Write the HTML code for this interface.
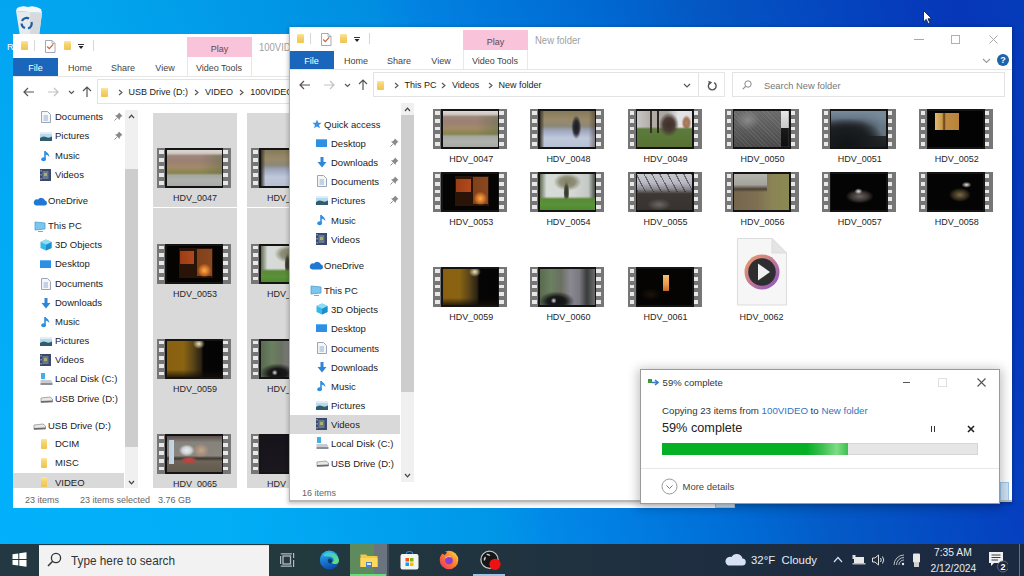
<!DOCTYPE html><html><head><meta charset="utf-8"><style>
*{margin:0;padding:0;box-sizing:border-box}
html,body{width:1024px;height:576px;overflow:hidden}
body{position:relative;font-family:"Liberation Sans",sans-serif;color:#222;background:#0289e8}
.abs{position:absolute}
.t{position:absolute;white-space:nowrap;line-height:1}
.win{position:absolute;background:#fff;overflow:hidden}
</style></head><body><div class="abs" style="left:0;top:0;width:1024px;height:576px;background:linear-gradient(180deg,rgba(0,40,140,0.07) 0%,rgba(0,40,140,0.03) 50%,rgba(0,0,0,0) 80%),linear-gradient(76deg,#02b0fb 0%,#02aef6 20%,#0096e8 44%,#0289e8 48%,#006fd8 63%,#045bc8 72%,#0540c0 88%,#0538bc 94%,#053dbd 100%)"></div>
<svg class="abs" style="left:14px;top:4px" width="32" height="32"><path d="M2 7 L28 9 L25 32 L6 32Z" fill="#e4eaee"/><path d="M16 8 L28 9 L25 32 L16 32Z" fill="#d6dadc"/><path d="M3 4 Q8 1 14 3 Q20 1 27 5 L28 9 L2 7Z" fill="#f4f6f8"/><g fill="none" stroke="#1e5e9e" stroke-width="2.2"><path d="M8 17 A5 5 0 0 1 15 14.5"/><path d="M17.5 18 A5 5 0 0 1 14 24.5"/><path d="M11 24 A5 5 0 0 1 7.6 19.5"/></g></svg>
<div class="win" style="left:13px;top:34px;width:722px;height:474px;">
<div class="abs" style="left:8px;top:7px;width:7px;height:9px;background:linear-gradient(180deg,#fbe7a0 0%,#f6d470 35%,#f0c450 100%);border-radius:1px"></div><div class="abs" style="left:21px;top:6px;width:1px;height:11px;background:#d6d6d6"></div><svg class="abs" style="left:32px;top:6px" width="11" height="13"><path d="M0.5 0.5 H7 L10 3.5 V12.5 H0.5Z" fill="#fff" stroke="#9aa2b0" stroke-width="0.9"/><path d="M7 0.5 V3.5 H10" fill="none" stroke="#9aa2b0" stroke-width="0.8"/><path d="M2.2 6.5 L4.3 8.7 L8.2 4.3" stroke="#c8643a" stroke-width="1.2" fill="none"/></svg><div class="abs" style="left:51px;top:7px;width:7px;height:9px;background:linear-gradient(180deg,#fbe7a0 0%,#f6d470 35%,#f0c450 100%);border-radius:1px"></div><svg class="abs" style="left:65px;top:10px" width="6" height="6"><path d="M0 0.5 H6" stroke="#333" stroke-width="1"/><path d="M0.5 2 L3 5 L5.5 2Z" fill="#222"/></svg><div class="abs" style="left:80px;top:6px;width:1px;height:11px;background:#d6d6d6"></div>
<div class="abs" style="left:174px;top:3px;width:65px;height:20px;background:#f9c4da"></div><div class="t" style="left:174px;top:10.5px;width:65px;text-align:center;font-size:9px;color:#5e4655">Play</div><div class="abs" style="left:174px;top:23px;width:65px;height:20px;border-left:1px solid #f2e2ea;border-right:1px solid #f2e2ea"></div><div class="t" style="left:246px;top:8.5px;font-size:10px;transform:scaleX(.95);transform-origin:0 0;color:#a0a0a0">100VIDEO</div><div class="abs" style="left:0;top:24px;width:45px;height:18px;background:#1a66ba"></div><div class="t" style="left:0;top:30px;width:45px;text-align:center;font-size:9px;color:#fff">File</div><div class="t" style="left:27px;top:30px;width:80px;text-align:center;font-size:9px;color:#444">Home</div><div class="t" style="left:70px;top:30px;width:80px;text-align:center;font-size:9px;color:#444">Share</div><div class="t" style="left:112px;top:30px;width:80px;text-align:center;font-size:9px;color:#444">View</div><div class="t" style="left:166px;top:30px;width:80px;text-align:center;font-size:9px;color:#444">Video Tools</div><div class="abs" style="left:0;top:42px;width:722px;height:1px;background:#e6e6e6"></div>
<svg class="abs" style="left:10px;top:53px" width="12" height="10"><path d="M1 5 H11 M5 1 L1 5 L5 9" stroke="#555" stroke-width="1.2" fill="none"/></svg><svg class="abs" style="left:34px;top:53px" width="12" height="10"><path d="M1 5 H11 M7 1 L11 5 L7 9" stroke="#c2c2c2" stroke-width="1.2" fill="none"/></svg><svg class="abs" style="left:55px;top:56px" width="7" height="5"><path d="M1 1 L3.5 3.5 L6 1" stroke="#555" stroke-width="1.1" fill="none"/></svg><svg class="abs" style="left:69px;top:52px" width="10" height="12"><path d="M5 11 V1 M1 5 L5 1 L9 5" stroke="#555" stroke-width="1.2" fill="none"/></svg><div class="abs" style="left:84px;top:45px;width:300px;height:25px;border:1px solid #e3e3e3;background:#fff"></div><div class="abs" style="left:88px;top:54px;width:7px;height:9px;background:linear-gradient(180deg,#fbe7a0 0%,#f6d470 35%,#f0c450 100%);border-radius:1px"></div><svg class="abs" style="left:104.7px;top:55px" width="5" height="7"><path d="M1 1 L4 3.5 L1 6" stroke="#555" stroke-width="1.1" fill="none"/></svg><div class="t" style="left:115.60000000000001px;top:53.5px;font-size:9px;color:#222">USB Drive (D:)</div><svg class="abs" style="left:181.2px;top:55px" width="5" height="7"><path d="M1 1 L4 3.5 L1 6" stroke="#555" stroke-width="1.1" fill="none"/></svg><div class="t" style="left:192.1px;top:53.5px;font-size:9px;color:#222">VIDEO</div><svg class="abs" style="left:226.39999999999998px;top:55px" width="5" height="7"><path d="M1 1 L4 3.5 L1 6" stroke="#555" stroke-width="1.1" fill="none"/></svg><div class="t" style="left:237.29999999999998px;top:53.5px;font-size:9px;color:#222">100VIDEO</div>
<div class="abs" style="left:0;top:73px;width:125px;height:381px;overflow:hidden"><svg class="abs" style="left:28px;top:-14.5px" width="10" height="11"><path d="M3.5 0 H6.5 V5 H9.5 L5 10.5 L0.5 5 H3.5Z" fill="#2f86d8"/></svg><div class="t" style="left:42px;top:-13.8px;font-size:9.8px;transform:scaleX(.97);transform-origin:0 0;color:#222">Downloads</div><svg class="abs" style="left:101px;top:-14.5px" width="9" height="9"><path d="M5 0.5 L8.5 4 L7.3 4.6 L5.8 6.2 L5.6 8 L1 3.4 L2.8 3.2 L4.4 1.7Z" fill="#8a8a8a"/><path d="M2.7 6.3 L0.5 8.5" stroke="#8a8a8a" stroke-width="1"/></svg><svg class="abs" style="left:28px;top:3.5px" width="10" height="12"><path d="M0.5 0.5 H6.5 L9.5 3.5 V11.5 H0.5Z" fill="#f4f6f8" stroke="#9aa6b4"/><path d="M2.5 5 H7 M2.5 7 H7 M2.5 9 H7" stroke="#7aa0c8" stroke-width="0.8"/></svg><div class="t" style="left:42px;top:5.2px;font-size:9.8px;transform:scaleX(.97);transform-origin:0 0;color:#222">Documents</div><svg class="abs" style="left:101px;top:4.5px" width="9" height="9"><path d="M5 0.5 L8.5 4 L7.3 4.6 L5.8 6.2 L5.6 8 L1 3.4 L2.8 3.2 L4.4 1.7Z" fill="#8a8a8a"/><path d="M2.7 6.3 L0.5 8.5" stroke="#8a8a8a" stroke-width="1"/></svg><svg class="abs" style="left:27px;top:24.5px" width="12" height="9"><rect x="0" y="0" width="12" height="9" fill="#b8d8ec"/><rect x="0" y="0" width="12" height="2" fill="#e0eef8"/><path d="M0 6 Q3 3.5 6 5 Q9 6.5 12 4.5 V9 H0Z" fill="#2e5e6e"/></svg><div class="t" style="left:42px;top:24.2px;font-size:9.8px;transform:scaleX(.97);transform-origin:0 0;color:#222">Pictures</div><svg class="abs" style="left:101px;top:23.5px" width="9" height="9"><path d="M5 0.5 L8.5 4 L7.3 4.6 L5.8 6.2 L5.6 8 L1 3.4 L2.8 3.2 L4.4 1.7Z" fill="#8a8a8a"/><path d="M2.7 6.3 L0.5 8.5" stroke="#8a8a8a" stroke-width="1"/></svg><svg class="abs" style="left:28px;top:42.5px" width="10" height="12"><path d="M4 1 V9" stroke="#2f8ee0" stroke-width="1.6"/><ellipse cx="2.6" cy="9.3" rx="2.4" ry="2" fill="#2f8ee0"/><path d="M4 1 Q8 3 8.5 7 Q7 4.5 4 4.5" fill="#2f8ee0"/></svg><div class="t" style="left:42px;top:44.2px;font-size:9.8px;transform:scaleX(.97);transform-origin:0 0;color:#222">Music</div><svg class="abs" style="left:27px;top:61.5px" width="11" height="12"><rect x="0" y="0" width="11" height="12" fill="#3a4a6e"/><rect x="2.5" y="2" width="6" height="8" fill="#6a7a8a"/><rect x="4" y="4" width="3" height="3" fill="#a8b070"/><rect x="0.5" y="1" width="1.2" height="1.5" fill="#9aa8c8"/><rect x="0.5" y="5" width="1.2" height="1.5" fill="#9aa8c8"/><rect x="0.5" y="9" width="1.2" height="1.5" fill="#9aa8c8"/></svg><div class="t" style="left:42px;top:63.2px;font-size:9.8px;transform:scaleX(.97);transform-origin:0 0;color:#222">Videos</div><svg class="abs" style="left:20px;top:89.5px" width="14" height="9"><path d="M3 8.5 H12 A2.5 2.5 0 0 0 12 3.6 A4 4 0 0 0 5 2.5 A3 3 0 0 0 3 8.5Z" fill="#1f78d6"/></svg><div class="t" style="left:35px;top:89.2px;font-size:9.8px;transform:scaleX(.97);transform-origin:0 0;color:#222">OneDrive</div><svg class="abs" style="left:21px;top:113.5px" width="13" height="11"><path d="M1 1 L11 2 L11 8 L1 9Z" fill="#7cc6ee" stroke="#4c9fd4" stroke-width="0.8"/><path d="M4 10.5 H9" stroke="#8aa" stroke-width="1"/></svg><div class="t" style="left:35px;top:114.2px;font-size:9.8px;transform:scaleX(.97);transform-origin:0 0;color:#222">This PC</div><svg class="abs" style="left:27px;top:131.5px" width="12" height="12"><path d="M6 0.5 L11.5 3 V9 L6 11.5 L0.5 9 V3Z" fill="#38b8e8"/><path d="M6 6 L11.5 3 V9 L6 11.5Z" fill="#1f8fcc"/><path d="M0.5 3 L6 0.5 L11.5 3 L6 5.5Z" fill="#8fdcf6"/></svg><div class="t" style="left:42px;top:133.2px;font-size:9.8px;transform:scaleX(.97);transform-origin:0 0;color:#222">3D Objects</div><div class="abs" style="left:27px;top:152.5px;width:11px;height:8px;background:#2e8fe6;border-top:1px solid #68b4f2"></div><div class="t" style="left:42px;top:152.2px;font-size:9.8px;transform:scaleX(.97);transform-origin:0 0;color:#222">Desktop</div><svg class="abs" style="left:28px;top:170.5px" width="10" height="12"><path d="M0.5 0.5 H6.5 L9.5 3.5 V11.5 H0.5Z" fill="#f4f6f8" stroke="#9aa6b4"/><path d="M2.5 5 H7 M2.5 7 H7 M2.5 9 H7" stroke="#7aa0c8" stroke-width="0.8"/></svg><div class="t" style="left:42px;top:172.2px;font-size:9.8px;transform:scaleX(.97);transform-origin:0 0;color:#222">Documents</div><svg class="abs" style="left:28px;top:190.5px" width="10" height="11"><path d="M3.5 0 H6.5 V5 H9.5 L5 10.5 L0.5 5 H3.5Z" fill="#2f86d8"/></svg><div class="t" style="left:42px;top:191.2px;font-size:9.8px;transform:scaleX(.97);transform-origin:0 0;color:#222">Downloads</div><svg class="abs" style="left:28px;top:208.5px" width="10" height="12"><path d="M4 1 V9" stroke="#2f8ee0" stroke-width="1.6"/><ellipse cx="2.6" cy="9.3" rx="2.4" ry="2" fill="#2f8ee0"/><path d="M4 1 Q8 3 8.5 7 Q7 4.5 4 4.5" fill="#2f8ee0"/></svg><div class="t" style="left:42px;top:210.2px;font-size:9.8px;transform:scaleX(.97);transform-origin:0 0;color:#222">Music</div><svg class="abs" style="left:27px;top:229.5px" width="12" height="9"><rect x="0" y="0" width="12" height="9" fill="#b8d8ec"/><rect x="0" y="0" width="12" height="2" fill="#e0eef8"/><path d="M0 6 Q3 3.5 6 5 Q9 6.5 12 4.5 V9 H0Z" fill="#2e5e6e"/></svg><div class="t" style="left:42px;top:229.2px;font-size:9.8px;transform:scaleX(.97);transform-origin:0 0;color:#222">Pictures</div><svg class="abs" style="left:27px;top:246.5px" width="11" height="12"><rect x="0" y="0" width="11" height="12" fill="#3a4a6e"/><rect x="2.5" y="2" width="6" height="8" fill="#6a7a8a"/><rect x="4" y="4" width="3" height="3" fill="#a8b070"/><rect x="0.5" y="1" width="1.2" height="1.5" fill="#9aa8c8"/><rect x="0.5" y="5" width="1.2" height="1.5" fill="#9aa8c8"/><rect x="0.5" y="9" width="1.2" height="1.5" fill="#9aa8c8"/></svg><div class="t" style="left:42px;top:248.2px;font-size:9.8px;transform:scaleX(.97);transform-origin:0 0;color:#222">Videos</div><svg class="abs" style="left:27px;top:265.5px" width="13" height="12"><rect x="1" y="0" width="4" height="6" fill="#42b0e8"/><path d="M0.5 7 H11 L12.5 10 H0.5Z" fill="#c8ccd2"/><rect x="0.5" y="10" width="12" height="2" fill="#8a9098"/></svg><div class="t" style="left:42px;top:267.2px;font-size:9.8px;transform:scaleX(.97);transform-origin:0 0;color:#222">Local Disk (C:)</div><svg class="abs" style="left:27px;top:288.5px" width="13" height="7"><path d="M1 2 L10 1 L12.5 3 V6 L1 6.5Z" fill="#e8e8e8" stroke="#8a8a8a" stroke-width="0.7"/><path d="M1 5 L12.5 4.5 V6 L1 6.5Z" fill="#6b6b6b"/></svg><div class="t" style="left:42px;top:287.2px;font-size:9.8px;transform:scaleX(.97);transform-origin:0 0;color:#222">USB Drive (D:)</div><svg class="abs" style="left:20px;top:315.5px" width="13" height="7"><path d="M1 2 L10 1 L12.5 3 V6 L1 6.5Z" fill="#e8e8e8" stroke="#8a8a8a" stroke-width="0.7"/><path d="M1 5 L12.5 4.5 V6 L1 6.5Z" fill="#6b6b6b"/></svg><div class="t" style="left:35px;top:314.2px;font-size:9.8px;transform:scaleX(.97);transform-origin:0 0;color:#222">USB Drive (D:)</div><div class="abs" style="left:28px;top:331.5px;width:6px;height:10px;background:linear-gradient(180deg,#fbe7a0 0%,#f6d470 35%,#f0c450 100%);border-radius:1px"></div><div class="t" style="left:42px;top:332.2px;font-size:9.8px;transform:scaleX(.97);transform-origin:0 0;color:#222">DCIM</div><div class="abs" style="left:28px;top:350.5px;width:6px;height:10px;background:linear-gradient(180deg,#fbe7a0 0%,#f6d470 35%,#f0c450 100%);border-radius:1px"></div><div class="t" style="left:42px;top:351.2px;font-size:9.8px;transform:scaleX(.97);transform-origin:0 0;color:#222">MISC</div><div class="abs" style="left:0;top:365.5px;width:111px;height:19px;background:#d9d9d9"></div><div class="abs" style="left:28px;top:370.0px;width:6px;height:10px;background:linear-gradient(180deg,#fbe7a0 0%,#f6d470 35%,#f0c450 100%);border-radius:1px"></div><div class="t" style="left:42px;top:370.7px;font-size:9.8px;transform:scaleX(.97);transform-origin:0 0;color:#222">VIDEO</div></div><div class="abs" style="left:112px;top:76px;width:13px;height:378px;background:#f0f0f0"></div><div class="abs" style="left:112px;top:135px;width:13px;height:277.5px;background:#cdcdcd"></div><svg class="abs" style="left:115px;top:79.5px" width="7" height="5"><path d="M1 4 L3.5 1.2 L6 4" stroke="#444" stroke-width="1.2" fill="none"/></svg><svg class="abs" style="left:115px;top:445.5px" width="7" height="5"><path d="M1 1 L3.5 3.8 L6 1" stroke="#444" stroke-width="1.2" fill="none"/></svg>
<div class="abs" style="left:125px;top:73px;width:300px;height:381px;overflow:hidden"><div class="abs" style="left:15px;top:5.5px;width:84px;height:94.5px;background:#d9d9d9"></div><div class="abs" style="left:19px;top:41.0px;width:74px;height:40px;background:#767676"><div class="abs" style="left:2px;top:2.0px;width:4.5px;height:3.8px;background:#e8e8e8"></div><div class="abs" style="left:2px;top:9.8px;width:4.5px;height:3.8px;background:#e8e8e8"></div><div class="abs" style="left:2px;top:17.6px;width:4.5px;height:3.8px;background:#e8e8e8"></div><div class="abs" style="left:2px;top:25.4px;width:4.5px;height:3.8px;background:#e8e8e8"></div><div class="abs" style="left:2px;top:33.2px;width:4.5px;height:3.8px;background:#e8e8e8"></div><div class="abs" style="left:66px;top:2.0px;width:4.5px;height:3.8px;background:#e8e8e8"></div><div class="abs" style="left:66px;top:9.8px;width:4.5px;height:3.8px;background:#e8e8e8"></div><div class="abs" style="left:66px;top:17.6px;width:4.5px;height:3.8px;background:#e8e8e8"></div><div class="abs" style="left:66px;top:25.4px;width:4.5px;height:3.8px;background:#e8e8e8"></div><div class="abs" style="left:66px;top:33.2px;width:4.5px;height:3.8px;background:#e8e8e8"></div><div class="abs" style="left:8px;top:0;width:58px;height:40px;background:#141414;padding:2px 1.5px"><div style="width:100%;height:100%;background:linear-gradient(180deg,#dcd8d4 0%,#d0c8c2 9%,rgba(0,0,0,0) 16%),linear-gradient(180deg,rgba(0,0,0,0) 64%,#a4a6a2 70%,#b0b2ae 85%,#a8aaa6 100%),linear-gradient(90deg,rgba(0,0,0,0) 60%,rgba(100,110,70,0.5) 100%),linear-gradient(180deg,#a08a80 10%,#9c8074 30%,#a28a6a 48%,#8c8650 60%,#88844e 66%),linear-gradient(90deg,#9a8880 0%,#a07e72 40%,#a89870 70%,#b0a070 100%)"></div></div></div><div class="t" style="left:15px;top:87.0px;width:84px;text-align:center;font-size:9px;color:#262626">HDV_0047</div><div class="abs" style="left:109px;top:5.5px;width:84px;height:94.5px;background:#d9d9d9"></div><div class="abs" style="left:113px;top:41.0px;width:74px;height:40px;background:#767676"><div class="abs" style="left:2px;top:2.0px;width:4.5px;height:3.8px;background:#e8e8e8"></div><div class="abs" style="left:2px;top:9.8px;width:4.5px;height:3.8px;background:#e8e8e8"></div><div class="abs" style="left:2px;top:17.6px;width:4.5px;height:3.8px;background:#e8e8e8"></div><div class="abs" style="left:2px;top:25.4px;width:4.5px;height:3.8px;background:#e8e8e8"></div><div class="abs" style="left:2px;top:33.2px;width:4.5px;height:3.8px;background:#e8e8e8"></div><div class="abs" style="left:66px;top:2.0px;width:4.5px;height:3.8px;background:#e8e8e8"></div><div class="abs" style="left:66px;top:9.8px;width:4.5px;height:3.8px;background:#e8e8e8"></div><div class="abs" style="left:66px;top:17.6px;width:4.5px;height:3.8px;background:#e8e8e8"></div><div class="abs" style="left:66px;top:25.4px;width:4.5px;height:3.8px;background:#e8e8e8"></div><div class="abs" style="left:66px;top:33.2px;width:4.5px;height:3.8px;background:#e8e8e8"></div><div class="abs" style="left:8px;top:0;width:58px;height:40px;background:#141414;padding:2px 1.5px"><div style="width:100%;height:100%;background:radial-gradient(ellipse 5px 12px at 66% 45%,#1a1a20 0%,#2a2a30 55%,rgba(0,0,0,0) 100%),linear-gradient(90deg,#3a3428 0%,rgba(0,0,0,0) 8%,rgba(0,0,0,0) 88%,rgba(60,50,40,.5) 100%),linear-gradient(180deg,#857a5c 0%,#9a8a6a 25%,#8a8878 42%,#a0a8c0 55%,#c0c8dc 75%,#b8c0d4 100%)"></div></div></div><div class="t" style="left:109px;top:87.0px;width:84px;text-align:center;font-size:9px;color:#262626">HDV_0048</div><div class="abs" style="left:15px;top:101px;width:84px;height:94.5px;background:#d9d9d9"></div><div class="abs" style="left:19px;top:136.5px;width:74px;height:40px;background:#767676"><div class="abs" style="left:2px;top:2.0px;width:4.5px;height:3.8px;background:#e8e8e8"></div><div class="abs" style="left:2px;top:9.8px;width:4.5px;height:3.8px;background:#e8e8e8"></div><div class="abs" style="left:2px;top:17.6px;width:4.5px;height:3.8px;background:#e8e8e8"></div><div class="abs" style="left:2px;top:25.4px;width:4.5px;height:3.8px;background:#e8e8e8"></div><div class="abs" style="left:2px;top:33.2px;width:4.5px;height:3.8px;background:#e8e8e8"></div><div class="abs" style="left:66px;top:2.0px;width:4.5px;height:3.8px;background:#e8e8e8"></div><div class="abs" style="left:66px;top:9.8px;width:4.5px;height:3.8px;background:#e8e8e8"></div><div class="abs" style="left:66px;top:17.6px;width:4.5px;height:3.8px;background:#e8e8e8"></div><div class="abs" style="left:66px;top:25.4px;width:4.5px;height:3.8px;background:#e8e8e8"></div><div class="abs" style="left:66px;top:33.2px;width:4.5px;height:3.8px;background:#e8e8e8"></div><div class="abs" style="left:8px;top:0;width:58px;height:40px;background:#141414;padding:2px 1.5px"><div style="width:100%;height:100%;background:radial-gradient(ellipse 7px 7px at 68% 68%,#f4b050 0%,#d87828 50%,rgba(0,0,0,0) 100%),linear-gradient(90deg,rgba(0,0,0,0) 24%,#9c3c16 24%,#b04a1c 50%,rgba(0,0,0,0) 50%) 0 5px/100% 13px no-repeat,linear-gradient(90deg,rgba(0,0,0,0) 54%,#80401a 54%,#8a4820 82%,rgba(0,0,0,0) 82%) 0 3px/100% 27px no-repeat,linear-gradient(90deg,rgba(0,0,0,0) 22%,#2a1408 22%,#2a1408 84%,rgba(0,0,0,0) 84%) 0 2px/100% 30px no-repeat,#060403"></div></div></div><div class="t" style="left:15px;top:182.5px;width:84px;text-align:center;font-size:9px;color:#262626">HDV_0053</div><div class="abs" style="left:109px;top:101px;width:84px;height:94.5px;background:#d9d9d9"></div><div class="abs" style="left:113px;top:136.5px;width:74px;height:40px;background:#767676"><div class="abs" style="left:2px;top:2.0px;width:4.5px;height:3.8px;background:#e8e8e8"></div><div class="abs" style="left:2px;top:9.8px;width:4.5px;height:3.8px;background:#e8e8e8"></div><div class="abs" style="left:2px;top:17.6px;width:4.5px;height:3.8px;background:#e8e8e8"></div><div class="abs" style="left:2px;top:25.4px;width:4.5px;height:3.8px;background:#e8e8e8"></div><div class="abs" style="left:2px;top:33.2px;width:4.5px;height:3.8px;background:#e8e8e8"></div><div class="abs" style="left:66px;top:2.0px;width:4.5px;height:3.8px;background:#e8e8e8"></div><div class="abs" style="left:66px;top:9.8px;width:4.5px;height:3.8px;background:#e8e8e8"></div><div class="abs" style="left:66px;top:17.6px;width:4.5px;height:3.8px;background:#e8e8e8"></div><div class="abs" style="left:66px;top:25.4px;width:4.5px;height:3.8px;background:#e8e8e8"></div><div class="abs" style="left:66px;top:33.2px;width:4.5px;height:3.8px;background:#e8e8e8"></div><div class="abs" style="left:8px;top:0;width:58px;height:40px;background:#141414;padding:2px 1.5px"><div style="width:100%;height:100%;background:linear-gradient(180deg,rgba(0,0,0,0) 62%,#5a8838 70%,#5a9238 85%,#4e8a30 100%),radial-gradient(ellipse 3px 11px at 48% 52%,#343428 0%,#444438 60%,rgba(0,0,0,0) 100%),radial-gradient(ellipse 14px 9px at 50% 22%,#80806a 0%,#909078 55%,rgba(0,0,0,0) 100%),linear-gradient(90deg,#606a50 0%,#d8dcd8 12%,#d4d8d4 60%,#c4c8c4 88%,#4a5048 100%)"></div></div></div><div class="t" style="left:109px;top:182.5px;width:84px;text-align:center;font-size:9px;color:#262626">HDV_0054</div><div class="abs" style="left:15px;top:196px;width:84px;height:94.5px;background:#d9d9d9"></div><div class="abs" style="left:19px;top:231.5px;width:74px;height:40px;background:#767676"><div class="abs" style="left:2px;top:2.0px;width:4.5px;height:3.8px;background:#e8e8e8"></div><div class="abs" style="left:2px;top:9.8px;width:4.5px;height:3.8px;background:#e8e8e8"></div><div class="abs" style="left:2px;top:17.6px;width:4.5px;height:3.8px;background:#e8e8e8"></div><div class="abs" style="left:2px;top:25.4px;width:4.5px;height:3.8px;background:#e8e8e8"></div><div class="abs" style="left:2px;top:33.2px;width:4.5px;height:3.8px;background:#e8e8e8"></div><div class="abs" style="left:66px;top:2.0px;width:4.5px;height:3.8px;background:#e8e8e8"></div><div class="abs" style="left:66px;top:9.8px;width:4.5px;height:3.8px;background:#e8e8e8"></div><div class="abs" style="left:66px;top:17.6px;width:4.5px;height:3.8px;background:#e8e8e8"></div><div class="abs" style="left:66px;top:25.4px;width:4.5px;height:3.8px;background:#e8e8e8"></div><div class="abs" style="left:66px;top:33.2px;width:4.5px;height:3.8px;background:#e8e8e8"></div><div class="abs" style="left:8px;top:0;width:58px;height:40px;background:#141414;padding:2px 1.5px"><div style="width:100%;height:100%;background:radial-gradient(ellipse 6px 5px at 58% 8%,#f0e8c0 0%,rgba(0,0,0,0) 100%),linear-gradient(180deg,rgba(0,0,0,0) 80%,rgba(20,14,8,.8) 100%),linear-gradient(90deg,#8a6010 0%,#8a6412 30%,#5a4418 48%,#2a2214 62%,#060504 66%,#040404 100%)"></div></div></div><div class="t" style="left:15px;top:277.5px;width:84px;text-align:center;font-size:9px;color:#262626">HDV_0059</div><div class="abs" style="left:109px;top:196px;width:84px;height:94.5px;background:#d9d9d9"></div><div class="abs" style="left:113px;top:231.5px;width:74px;height:40px;background:#767676"><div class="abs" style="left:2px;top:2.0px;width:4.5px;height:3.8px;background:#e8e8e8"></div><div class="abs" style="left:2px;top:9.8px;width:4.5px;height:3.8px;background:#e8e8e8"></div><div class="abs" style="left:2px;top:17.6px;width:4.5px;height:3.8px;background:#e8e8e8"></div><div class="abs" style="left:2px;top:25.4px;width:4.5px;height:3.8px;background:#e8e8e8"></div><div class="abs" style="left:2px;top:33.2px;width:4.5px;height:3.8px;background:#e8e8e8"></div><div class="abs" style="left:66px;top:2.0px;width:4.5px;height:3.8px;background:#e8e8e8"></div><div class="abs" style="left:66px;top:9.8px;width:4.5px;height:3.8px;background:#e8e8e8"></div><div class="abs" style="left:66px;top:17.6px;width:4.5px;height:3.8px;background:#e8e8e8"></div><div class="abs" style="left:66px;top:25.4px;width:4.5px;height:3.8px;background:#e8e8e8"></div><div class="abs" style="left:66px;top:33.2px;width:4.5px;height:3.8px;background:#e8e8e8"></div><div class="abs" style="left:8px;top:0;width:58px;height:40px;background:#141414;padding:2px 1.5px"><div style="width:100%;height:100%;background:radial-gradient(ellipse 3px 3px at 25% 88%,#e0e0e0 0%,rgba(0,0,0,0) 100%),radial-gradient(ellipse 18px 10px at 30% 90%,#101010 0%,#1a1a1a 50%,rgba(0,0,0,0) 100%),linear-gradient(90deg,#5a6a50 0%,#6a8060 20%,#6a7060 38%,#8a8890 55%,#7a7880 72%,#3a3c3c 85%,#6a6c6c 100%)"></div></div></div><div class="t" style="left:109px;top:277.5px;width:84px;text-align:center;font-size:9px;color:#262626">HDV_0060</div><div class="abs" style="left:15px;top:291px;width:84px;height:94.5px;background:#d9d9d9"></div><div class="abs" style="left:19px;top:326.5px;width:74px;height:40px;background:#767676"><div class="abs" style="left:2px;top:2.0px;width:4.5px;height:3.8px;background:#e8e8e8"></div><div class="abs" style="left:2px;top:9.8px;width:4.5px;height:3.8px;background:#e8e8e8"></div><div class="abs" style="left:2px;top:17.6px;width:4.5px;height:3.8px;background:#e8e8e8"></div><div class="abs" style="left:2px;top:25.4px;width:4.5px;height:3.8px;background:#e8e8e8"></div><div class="abs" style="left:2px;top:33.2px;width:4.5px;height:3.8px;background:#e8e8e8"></div><div class="abs" style="left:66px;top:2.0px;width:4.5px;height:3.8px;background:#e8e8e8"></div><div class="abs" style="left:66px;top:9.8px;width:4.5px;height:3.8px;background:#e8e8e8"></div><div class="abs" style="left:66px;top:17.6px;width:4.5px;height:3.8px;background:#e8e8e8"></div><div class="abs" style="left:66px;top:25.4px;width:4.5px;height:3.8px;background:#e8e8e8"></div><div class="abs" style="left:66px;top:33.2px;width:4.5px;height:3.8px;background:#e8e8e8"></div><div class="abs" style="left:8px;top:0;width:58px;height:40px;background:#141414;padding:2px 1.5px"><div style="width:100%;height:100%;background:radial-gradient(ellipse 9px 4px at 40% 68%,#c84440 0%,#a84a40 55%,rgba(0,0,0,0) 100%),radial-gradient(ellipse 8px 6px at 36% 40%,#e8eef2 0%,#d0d4d8 55%,rgba(0,0,0,0) 100%),radial-gradient(ellipse 8px 7px at 62% 40%,#c4a48c 0%,#a89080 55%,rgba(0,0,0,0) 100%),linear-gradient(90deg,rgba(0,0,0,0) 3%,#b8cce0 3%,#c8d8e8 13%,rgba(0,0,0,0) 13%) 0 4px/100% 24px no-repeat,linear-gradient(180deg,#5a4e4a 0%,#86827c 18%,#8a867e 55%,#3e3a34 62%,#6e6458 70%,#625a4e 100%)"></div></div></div><div class="t" style="left:15px;top:372.5px;width:84px;text-align:center;font-size:9px;color:#262626">HDV_0065</div><div class="abs" style="left:109px;top:291px;width:84px;height:94.5px;background:#d9d9d9"></div><div class="abs" style="left:113px;top:326.5px;width:74px;height:40px;background:#767676"><div class="abs" style="left:2px;top:2.0px;width:4.5px;height:3.8px;background:#e8e8e8"></div><div class="abs" style="left:2px;top:9.8px;width:4.5px;height:3.8px;background:#e8e8e8"></div><div class="abs" style="left:2px;top:17.6px;width:4.5px;height:3.8px;background:#e8e8e8"></div><div class="abs" style="left:2px;top:25.4px;width:4.5px;height:3.8px;background:#e8e8e8"></div><div class="abs" style="left:2px;top:33.2px;width:4.5px;height:3.8px;background:#e8e8e8"></div><div class="abs" style="left:66px;top:2.0px;width:4.5px;height:3.8px;background:#e8e8e8"></div><div class="abs" style="left:66px;top:9.8px;width:4.5px;height:3.8px;background:#e8e8e8"></div><div class="abs" style="left:66px;top:17.6px;width:4.5px;height:3.8px;background:#e8e8e8"></div><div class="abs" style="left:66px;top:25.4px;width:4.5px;height:3.8px;background:#e8e8e8"></div><div class="abs" style="left:66px;top:33.2px;width:4.5px;height:3.8px;background:#e8e8e8"></div><div class="abs" style="left:8px;top:0;width:58px;height:40px;background:#141414;padding:2px 1.5px"><div style="width:100%;height:100%;background:radial-gradient(ellipse 5px 5px at 62% 62%,#2e2a3a 0%,rgba(0,0,0,0) 100%),linear-gradient(180deg,#16141a 0%,#1a181e 100%)"></div></div></div><div class="t" style="left:109px;top:372.5px;width:84px;text-align:center;font-size:9px;color:#262626">HDV_0066</div></div>
<div class="t" style="left:12px;top:461.5px;font-size:9px;color:#666">23 items</div><div class="t" style="left:67px;top:461.5px;font-size:9px;color:#666">23 items selected</div><div class="t" style="left:145px;top:461.5px;font-size:9px;color:#666">3.76 GB</div><div class="abs" style="left:702px;top:455px;width:20px;height:19px;background:#cfe3f5;border:1px solid #9cc8ec"></div>
</div>
<div class="win" style="left:289px;top:27px;width:723px;height:474.5px;box-shadow:0 1px 4px 1px rgba(0,0,0,0.22);">
<div class="abs" style="left:8px;top:7px;width:7px;height:9px;background:linear-gradient(180deg,#fbe7a0 0%,#f6d470 35%,#f0c450 100%);border-radius:1px"></div><div class="abs" style="left:21px;top:6px;width:1px;height:11px;background:#d6d6d6"></div><svg class="abs" style="left:32px;top:6px" width="11" height="13"><path d="M0.5 0.5 H7 L10 3.5 V12.5 H0.5Z" fill="#fff" stroke="#9aa2b0" stroke-width="0.9"/><path d="M7 0.5 V3.5 H10" fill="none" stroke="#9aa2b0" stroke-width="0.8"/><path d="M2.2 6.5 L4.3 8.7 L8.2 4.3" stroke="#c8643a" stroke-width="1.2" fill="none"/></svg><div class="abs" style="left:51px;top:7px;width:7px;height:9px;background:linear-gradient(180deg,#fbe7a0 0%,#f6d470 35%,#f0c450 100%);border-radius:1px"></div><svg class="abs" style="left:65px;top:10px" width="6" height="6"><path d="M0 0.5 H6" stroke="#333" stroke-width="1"/><path d="M0.5 2 L3 5 L5.5 2Z" fill="#222"/></svg><div class="abs" style="left:80px;top:6px;width:1px;height:11px;background:#d6d6d6"></div>
<div class="abs" style="left:174px;top:3px;width:65px;height:20px;background:#f9c4da"></div><div class="t" style="left:174px;top:10.5px;width:65px;text-align:center;font-size:9px;color:#5e4655">Play</div><div class="abs" style="left:174px;top:23px;width:65px;height:20px;border-left:1px solid #f2e2ea;border-right:1px solid #f2e2ea"></div><div class="t" style="left:246px;top:8.5px;font-size:10px;transform:scaleX(.95);transform-origin:0 0;color:#a0a0a0">New folder</div><div class="abs" style="left:0;top:24px;width:45px;height:18px;background:#1a66ba"></div><div class="t" style="left:0;top:30px;width:45px;text-align:center;font-size:9px;color:#fff">File</div><div class="t" style="left:27px;top:30px;width:80px;text-align:center;font-size:9px;color:#444">Home</div><div class="t" style="left:70px;top:30px;width:80px;text-align:center;font-size:9px;color:#444">Share</div><div class="t" style="left:112px;top:30px;width:80px;text-align:center;font-size:9px;color:#444">View</div><div class="t" style="left:166px;top:30px;width:80px;text-align:center;font-size:9px;color:#444">Video Tools</div><div class="abs" style="left:0;top:42px;width:723px;height:1px;background:#e6e6e6"></div>
<svg class="abs" style="left:10px;top:53px" width="12" height="10"><path d="M1 5 H11 M5 1 L1 5 L5 9" stroke="#555" stroke-width="1.2" fill="none"/></svg><svg class="abs" style="left:34px;top:53px" width="12" height="10"><path d="M1 5 H11 M7 1 L11 5 L7 9" stroke="#c2c2c2" stroke-width="1.2" fill="none"/></svg><svg class="abs" style="left:55px;top:56px" width="7" height="5"><path d="M1 1 L3.5 3.5 L6 1" stroke="#555" stroke-width="1.1" fill="none"/></svg><svg class="abs" style="left:69px;top:52px" width="10" height="12"><path d="M5 11 V1 M1 5 L5 1 L9 5" stroke="#555" stroke-width="1.2" fill="none"/></svg><div class="abs" style="left:84px;top:45px;width:326px;height:25px;border:1px solid #e3e3e3;background:#fff"></div><div class="abs" style="left:88px;top:54px;width:7px;height:9px;background:linear-gradient(180deg,#fbe7a0 0%,#f6d470 35%,#f0c450 100%);border-radius:1px"></div><svg class="abs" style="left:104.7px;top:55px" width="5" height="7"><path d="M1 1 L4 3.5 L1 6" stroke="#555" stroke-width="1.1" fill="none"/></svg><div class="t" style="left:115.60000000000001px;top:53.5px;font-size:9px;color:#222">This PC</div><svg class="abs" style="left:152.10000000000002px;top:55px" width="5" height="7"><path d="M1 1 L4 3.5 L1 6" stroke="#555" stroke-width="1.1" fill="none"/></svg><div class="t" style="left:163.00000000000003px;top:53.5px;font-size:9px;color:#222">Videos</div><svg class="abs" style="left:198.50000000000003px;top:55px" width="5" height="7"><path d="M1 1 L4 3.5 L1 6" stroke="#555" stroke-width="1.1" fill="none"/></svg><div class="t" style="left:209.40000000000003px;top:53.5px;font-size:9px;color:#222">New folder</div>
<div class="abs" style="left:0;top:73px;width:125px;height:381.5px;overflow:hidden"><svg class="abs" style="left:23px;top:19px" width="10" height="10"><path d="M5 0.5 L6.3 3.7 L9.6 3.8 L7 5.9 L8 9.3 L5 7.4 L2 9.3 L3 5.9 L0.4 3.8 L3.7 3.7Z" fill="#3a8ee6"/></svg><div class="t" style="left:35px;top:19.7px;font-size:9.8px;transform:scaleX(.97);transform-origin:0 0;color:#222">Quick access</div><div class="abs" style="left:27px;top:39px;width:11px;height:8px;background:#2e8fe6;border-top:1px solid #68b4f2"></div><div class="t" style="left:42px;top:38.7px;font-size:9.8px;transform:scaleX(.97);transform-origin:0 0;color:#222">Desktop</div><svg class="abs" style="left:101px;top:38px" width="9" height="9"><path d="M5 0.5 L8.5 4 L7.3 4.6 L5.8 6.2 L5.6 8 L1 3.4 L2.8 3.2 L4.4 1.7Z" fill="#8a8a8a"/><path d="M2.7 6.3 L0.5 8.5" stroke="#8a8a8a" stroke-width="1"/></svg><svg class="abs" style="left:28px;top:57px" width="10" height="11"><path d="M3.5 0 H6.5 V5 H9.5 L5 10.5 L0.5 5 H3.5Z" fill="#2f86d8"/></svg><div class="t" style="left:42px;top:57.7px;font-size:9.8px;transform:scaleX(.97);transform-origin:0 0;color:#222">Downloads</div><svg class="abs" style="left:101px;top:57px" width="9" height="9"><path d="M5 0.5 L8.5 4 L7.3 4.6 L5.8 6.2 L5.6 8 L1 3.4 L2.8 3.2 L4.4 1.7Z" fill="#8a8a8a"/><path d="M2.7 6.3 L0.5 8.5" stroke="#8a8a8a" stroke-width="1"/></svg><svg class="abs" style="left:28px;top:75px" width="10" height="12"><path d="M0.5 0.5 H6.5 L9.5 3.5 V11.5 H0.5Z" fill="#f4f6f8" stroke="#9aa6b4"/><path d="M2.5 5 H7 M2.5 7 H7 M2.5 9 H7" stroke="#7aa0c8" stroke-width="0.8"/></svg><div class="t" style="left:42px;top:76.7px;font-size:9.8px;transform:scaleX(.97);transform-origin:0 0;color:#222">Documents</div><svg class="abs" style="left:101px;top:76px" width="9" height="9"><path d="M5 0.5 L8.5 4 L7.3 4.6 L5.8 6.2 L5.6 8 L1 3.4 L2.8 3.2 L4.4 1.7Z" fill="#8a8a8a"/><path d="M2.7 6.3 L0.5 8.5" stroke="#8a8a8a" stroke-width="1"/></svg><svg class="abs" style="left:27px;top:96px" width="12" height="9"><rect x="0" y="0" width="12" height="9" fill="#b8d8ec"/><rect x="0" y="0" width="12" height="2" fill="#e0eef8"/><path d="M0 6 Q3 3.5 6 5 Q9 6.5 12 4.5 V9 H0Z" fill="#2e5e6e"/></svg><div class="t" style="left:42px;top:95.7px;font-size:9.8px;transform:scaleX(.97);transform-origin:0 0;color:#222">Pictures</div><svg class="abs" style="left:101px;top:95px" width="9" height="9"><path d="M5 0.5 L8.5 4 L7.3 4.6 L5.8 6.2 L5.6 8 L1 3.4 L2.8 3.2 L4.4 1.7Z" fill="#8a8a8a"/><path d="M2.7 6.3 L0.5 8.5" stroke="#8a8a8a" stroke-width="1"/></svg><svg class="abs" style="left:28px;top:114px" width="10" height="12"><path d="M4 1 V9" stroke="#2f8ee0" stroke-width="1.6"/><ellipse cx="2.6" cy="9.3" rx="2.4" ry="2" fill="#2f8ee0"/><path d="M4 1 Q8 3 8.5 7 Q7 4.5 4 4.5" fill="#2f8ee0"/></svg><div class="t" style="left:42px;top:115.7px;font-size:9.8px;transform:scaleX(.97);transform-origin:0 0;color:#222">Music</div><svg class="abs" style="left:27px;top:133px" width="11" height="12"><rect x="0" y="0" width="11" height="12" fill="#3a4a6e"/><rect x="2.5" y="2" width="6" height="8" fill="#6a7a8a"/><rect x="4" y="4" width="3" height="3" fill="#a8b070"/><rect x="0.5" y="1" width="1.2" height="1.5" fill="#9aa8c8"/><rect x="0.5" y="5" width="1.2" height="1.5" fill="#9aa8c8"/><rect x="0.5" y="9" width="1.2" height="1.5" fill="#9aa8c8"/></svg><div class="t" style="left:42px;top:134.7px;font-size:9.8px;transform:scaleX(.97);transform-origin:0 0;color:#222">Videos</div><svg class="abs" style="left:20px;top:161px" width="14" height="9"><path d="M3 8.5 H12 A2.5 2.5 0 0 0 12 3.6 A4 4 0 0 0 5 2.5 A3 3 0 0 0 3 8.5Z" fill="#1f78d6"/></svg><div class="t" style="left:35px;top:160.7px;font-size:9.8px;transform:scaleX(.97);transform-origin:0 0;color:#222">OneDrive</div><svg class="abs" style="left:21px;top:185px" width="13" height="11"><path d="M1 1 L11 2 L11 8 L1 9Z" fill="#7cc6ee" stroke="#4c9fd4" stroke-width="0.8"/><path d="M4 10.5 H9" stroke="#8aa" stroke-width="1"/></svg><div class="t" style="left:35px;top:185.7px;font-size:9.8px;transform:scaleX(.97);transform-origin:0 0;color:#222">This PC</div><svg class="abs" style="left:27px;top:203px" width="12" height="12"><path d="M6 0.5 L11.5 3 V9 L6 11.5 L0.5 9 V3Z" fill="#38b8e8"/><path d="M6 6 L11.5 3 V9 L6 11.5Z" fill="#1f8fcc"/><path d="M0.5 3 L6 0.5 L11.5 3 L6 5.5Z" fill="#8fdcf6"/></svg><div class="t" style="left:42px;top:204.7px;font-size:9.8px;transform:scaleX(.97);transform-origin:0 0;color:#222">3D Objects</div><div class="abs" style="left:27px;top:224px;width:11px;height:8px;background:#2e8fe6;border-top:1px solid #68b4f2"></div><div class="t" style="left:42px;top:223.7px;font-size:9.8px;transform:scaleX(.97);transform-origin:0 0;color:#222">Desktop</div><svg class="abs" style="left:28px;top:242px" width="10" height="12"><path d="M0.5 0.5 H6.5 L9.5 3.5 V11.5 H0.5Z" fill="#f4f6f8" stroke="#9aa6b4"/><path d="M2.5 5 H7 M2.5 7 H7 M2.5 9 H7" stroke="#7aa0c8" stroke-width="0.8"/></svg><div class="t" style="left:42px;top:243.7px;font-size:9.8px;transform:scaleX(.97);transform-origin:0 0;color:#222">Documents</div><svg class="abs" style="left:28px;top:262px" width="10" height="11"><path d="M3.5 0 H6.5 V5 H9.5 L5 10.5 L0.5 5 H3.5Z" fill="#2f86d8"/></svg><div class="t" style="left:42px;top:262.7px;font-size:9.8px;transform:scaleX(.97);transform-origin:0 0;color:#222">Downloads</div><svg class="abs" style="left:28px;top:280px" width="10" height="12"><path d="M4 1 V9" stroke="#2f8ee0" stroke-width="1.6"/><ellipse cx="2.6" cy="9.3" rx="2.4" ry="2" fill="#2f8ee0"/><path d="M4 1 Q8 3 8.5 7 Q7 4.5 4 4.5" fill="#2f8ee0"/></svg><div class="t" style="left:42px;top:281.7px;font-size:9.8px;transform:scaleX(.97);transform-origin:0 0;color:#222">Music</div><svg class="abs" style="left:27px;top:301px" width="12" height="9"><rect x="0" y="0" width="12" height="9" fill="#b8d8ec"/><rect x="0" y="0" width="12" height="2" fill="#e0eef8"/><path d="M0 6 Q3 3.5 6 5 Q9 6.5 12 4.5 V9 H0Z" fill="#2e5e6e"/></svg><div class="t" style="left:42px;top:300.7px;font-size:9.8px;transform:scaleX(.97);transform-origin:0 0;color:#222">Pictures</div><div class="abs" style="left:0;top:314.5px;width:111px;height:19px;background:#d9d9d9"></div><svg class="abs" style="left:27px;top:318px" width="11" height="12"><rect x="0" y="0" width="11" height="12" fill="#3a4a6e"/><rect x="2.5" y="2" width="6" height="8" fill="#6a7a8a"/><rect x="4" y="4" width="3" height="3" fill="#a8b070"/><rect x="0.5" y="1" width="1.2" height="1.5" fill="#9aa8c8"/><rect x="0.5" y="5" width="1.2" height="1.5" fill="#9aa8c8"/><rect x="0.5" y="9" width="1.2" height="1.5" fill="#9aa8c8"/></svg><div class="t" style="left:42px;top:319.7px;font-size:9.8px;transform:scaleX(.97);transform-origin:0 0;color:#222">Videos</div><svg class="abs" style="left:27px;top:337px" width="13" height="12"><rect x="1" y="0" width="4" height="6" fill="#42b0e8"/><path d="M0.5 7 H11 L12.5 10 H0.5Z" fill="#c8ccd2"/><rect x="0.5" y="10" width="12" height="2" fill="#8a9098"/></svg><div class="t" style="left:42px;top:338.7px;font-size:9.8px;transform:scaleX(.97);transform-origin:0 0;color:#222">Local Disk (C:)</div><svg class="abs" style="left:27px;top:360px" width="13" height="7"><path d="M1 2 L10 1 L12.5 3 V6 L1 6.5Z" fill="#e8e8e8" stroke="#8a8a8a" stroke-width="0.7"/><path d="M1 5 L12.5 4.5 V6 L1 6.5Z" fill="#6b6b6b"/></svg><div class="t" style="left:42px;top:358.7px;font-size:9.8px;transform:scaleX(.97);transform-origin:0 0;color:#222">USB Drive (D:)</div><svg class="abs" style="left:20px;top:387px" width="13" height="7"><path d="M1 2 L10 1 L12.5 3 V6 L1 6.5Z" fill="#e8e8e8" stroke="#8a8a8a" stroke-width="0.7"/><path d="M1 5 L12.5 4.5 V6 L1 6.5Z" fill="#6b6b6b"/></svg><div class="t" style="left:35px;top:385.7px;font-size:9.8px;transform:scaleX(.97);transform-origin:0 0;color:#222">USB Drive (D:)</div></div><div class="abs" style="left:112px;top:76px;width:13px;height:378.5px;background:#f0f0f0"></div><div class="abs" style="left:112px;top:88px;width:13px;height:277px;background:#cdcdcd"></div><svg class="abs" style="left:115px;top:79.5px" width="7" height="5"><path d="M1 4 L3.5 1.2 L6 4" stroke="#444" stroke-width="1.2" fill="none"/></svg><svg class="abs" style="left:115px;top:446.0px" width="7" height="5"><path d="M1 1 L3.5 3.8 L6 1" stroke="#444" stroke-width="1.2" fill="none"/></svg>
<div class="abs" style="left:144.3px;top:82px;width:74px;height:40px;background:#767676"><div class="abs" style="left:2px;top:2.0px;width:4.5px;height:3.8px;background:#e8e8e8"></div><div class="abs" style="left:2px;top:9.8px;width:4.5px;height:3.8px;background:#e8e8e8"></div><div class="abs" style="left:2px;top:17.6px;width:4.5px;height:3.8px;background:#e8e8e8"></div><div class="abs" style="left:2px;top:25.4px;width:4.5px;height:3.8px;background:#e8e8e8"></div><div class="abs" style="left:2px;top:33.2px;width:4.5px;height:3.8px;background:#e8e8e8"></div><div class="abs" style="left:66px;top:2.0px;width:4.5px;height:3.8px;background:#e8e8e8"></div><div class="abs" style="left:66px;top:9.8px;width:4.5px;height:3.8px;background:#e8e8e8"></div><div class="abs" style="left:66px;top:17.6px;width:4.5px;height:3.8px;background:#e8e8e8"></div><div class="abs" style="left:66px;top:25.4px;width:4.5px;height:3.8px;background:#e8e8e8"></div><div class="abs" style="left:66px;top:33.2px;width:4.5px;height:3.8px;background:#e8e8e8"></div><div class="abs" style="left:8px;top:0;width:58px;height:40px;background:#141414;padding:2px 1.5px"><div style="width:100%;height:100%;background:linear-gradient(180deg,#dcd8d4 0%,#d0c8c2 9%,rgba(0,0,0,0) 16%),linear-gradient(180deg,rgba(0,0,0,0) 64%,#a4a6a2 70%,#b0b2ae 85%,#a8aaa6 100%),linear-gradient(90deg,rgba(0,0,0,0) 60%,rgba(100,110,70,0.5) 100%),linear-gradient(180deg,#a08a80 10%,#9c8074 30%,#a28a6a 48%,#8c8650 60%,#88844e 66%),linear-gradient(90deg,#9a8880 0%,#a07e72 40%,#a89870 70%,#b0a070 100%)"></div></div></div><div class="t" style="left:131.3px;top:127.5px;width:102px;text-align:center;font-size:9px;color:#262626">HDV_0047</div><div class="abs" style="left:241.4px;top:82px;width:74px;height:40px;background:#767676"><div class="abs" style="left:2px;top:2.0px;width:4.5px;height:3.8px;background:#e8e8e8"></div><div class="abs" style="left:2px;top:9.8px;width:4.5px;height:3.8px;background:#e8e8e8"></div><div class="abs" style="left:2px;top:17.6px;width:4.5px;height:3.8px;background:#e8e8e8"></div><div class="abs" style="left:2px;top:25.4px;width:4.5px;height:3.8px;background:#e8e8e8"></div><div class="abs" style="left:2px;top:33.2px;width:4.5px;height:3.8px;background:#e8e8e8"></div><div class="abs" style="left:66px;top:2.0px;width:4.5px;height:3.8px;background:#e8e8e8"></div><div class="abs" style="left:66px;top:9.8px;width:4.5px;height:3.8px;background:#e8e8e8"></div><div class="abs" style="left:66px;top:17.6px;width:4.5px;height:3.8px;background:#e8e8e8"></div><div class="abs" style="left:66px;top:25.4px;width:4.5px;height:3.8px;background:#e8e8e8"></div><div class="abs" style="left:66px;top:33.2px;width:4.5px;height:3.8px;background:#e8e8e8"></div><div class="abs" style="left:8px;top:0;width:58px;height:40px;background:#141414;padding:2px 1.5px"><div style="width:100%;height:100%;background:radial-gradient(ellipse 5px 12px at 66% 45%,#1a1a20 0%,#2a2a30 55%,rgba(0,0,0,0) 100%),linear-gradient(90deg,#3a3428 0%,rgba(0,0,0,0) 8%,rgba(0,0,0,0) 88%,rgba(60,50,40,.5) 100%),linear-gradient(180deg,#857a5c 0%,#9a8a6a 25%,#8a8878 42%,#a0a8c0 55%,#c0c8dc 75%,#b8c0d4 100%)"></div></div></div><div class="t" style="left:228.4px;top:127.5px;width:102px;text-align:center;font-size:9px;color:#262626">HDV_0048</div><div class="abs" style="left:338.5px;top:82px;width:74px;height:40px;background:#767676"><div class="abs" style="left:2px;top:2.0px;width:4.5px;height:3.8px;background:#e8e8e8"></div><div class="abs" style="left:2px;top:9.8px;width:4.5px;height:3.8px;background:#e8e8e8"></div><div class="abs" style="left:2px;top:17.6px;width:4.5px;height:3.8px;background:#e8e8e8"></div><div class="abs" style="left:2px;top:25.4px;width:4.5px;height:3.8px;background:#e8e8e8"></div><div class="abs" style="left:2px;top:33.2px;width:4.5px;height:3.8px;background:#e8e8e8"></div><div class="abs" style="left:66px;top:2.0px;width:4.5px;height:3.8px;background:#e8e8e8"></div><div class="abs" style="left:66px;top:9.8px;width:4.5px;height:3.8px;background:#e8e8e8"></div><div class="abs" style="left:66px;top:17.6px;width:4.5px;height:3.8px;background:#e8e8e8"></div><div class="abs" style="left:66px;top:25.4px;width:4.5px;height:3.8px;background:#e8e8e8"></div><div class="abs" style="left:66px;top:33.2px;width:4.5px;height:3.8px;background:#e8e8e8"></div><div class="abs" style="left:8px;top:0;width:58px;height:40px;background:#141414;padding:2px 1.5px"><div style="width:100%;height:100%;background:linear-gradient(90deg,rgba(0,0,0,0) 24%,#3a3028 24%,#3a3028 28%,rgba(0,0,0,0) 28%,rgba(0,0,0,0) 36%,#2e2620 36%,#2e2620 40%,rgba(0,0,0,0) 40%) 0 0/100% 62% no-repeat,radial-gradient(ellipse 10px 12px at 58% 38%,#3e3028 0%,#4a3c34 55%,rgba(0,0,0,0) 100%),linear-gradient(180deg,rgba(0,0,0,0) 44%,#5e7a3c 50%,#587838 75%,#5a7034 100%),radial-gradient(ellipse 5px 8px at 90% 33%,#b08460 0%,#a07456 55%,rgba(0,0,0,0) 100%),linear-gradient(90deg,#c8c6c4 0%,#b0aca8 25%,#a8a4a0 55%,#e4e4e6 75%,#e0e0e2 100%)"></div></div></div><div class="t" style="left:325.5px;top:127.5px;width:102px;text-align:center;font-size:9px;color:#262626">HDV_0049</div><div class="abs" style="left:435.59999999999997px;top:82px;width:74px;height:40px;background:#767676"><div class="abs" style="left:2px;top:2.0px;width:4.5px;height:3.8px;background:#e8e8e8"></div><div class="abs" style="left:2px;top:9.8px;width:4.5px;height:3.8px;background:#e8e8e8"></div><div class="abs" style="left:2px;top:17.6px;width:4.5px;height:3.8px;background:#e8e8e8"></div><div class="abs" style="left:2px;top:25.4px;width:4.5px;height:3.8px;background:#e8e8e8"></div><div class="abs" style="left:2px;top:33.2px;width:4.5px;height:3.8px;background:#e8e8e8"></div><div class="abs" style="left:66px;top:2.0px;width:4.5px;height:3.8px;background:#e8e8e8"></div><div class="abs" style="left:66px;top:9.8px;width:4.5px;height:3.8px;background:#e8e8e8"></div><div class="abs" style="left:66px;top:17.6px;width:4.5px;height:3.8px;background:#e8e8e8"></div><div class="abs" style="left:66px;top:25.4px;width:4.5px;height:3.8px;background:#e8e8e8"></div><div class="abs" style="left:66px;top:33.2px;width:4.5px;height:3.8px;background:#e8e8e8"></div><div class="abs" style="left:8px;top:0;width:58px;height:40px;background:#141414;padding:2px 1.5px"><div style="width:100%;height:100%;background:linear-gradient(180deg,#e8e8ea 0%,#c8c8c8 100%) 100% 0/14% 48% no-repeat,linear-gradient(180deg,#1a1a1a 0%,#0e0e0e 100%) 100% 100%/14% 52% no-repeat,radial-gradient(ellipse 12px 10px at 25% 25%,#8a8a8a 0%,rgba(0,0,0,0) 100%),repeating-linear-gradient(45deg,rgba(255,255,255,.08) 0 1px,rgba(0,0,0,0) 1px 3px),linear-gradient(180deg,#6a6a6a 0%,#5a5a5a 50%,#484848 100%)"></div></div></div><div class="t" style="left:422.59999999999997px;top:127.5px;width:102px;text-align:center;font-size:9px;color:#262626">HDV_0050</div><div class="abs" style="left:532.7px;top:82px;width:74px;height:40px;background:#767676"><div class="abs" style="left:2px;top:2.0px;width:4.5px;height:3.8px;background:#e8e8e8"></div><div class="abs" style="left:2px;top:9.8px;width:4.5px;height:3.8px;background:#e8e8e8"></div><div class="abs" style="left:2px;top:17.6px;width:4.5px;height:3.8px;background:#e8e8e8"></div><div class="abs" style="left:2px;top:25.4px;width:4.5px;height:3.8px;background:#e8e8e8"></div><div class="abs" style="left:2px;top:33.2px;width:4.5px;height:3.8px;background:#e8e8e8"></div><div class="abs" style="left:66px;top:2.0px;width:4.5px;height:3.8px;background:#e8e8e8"></div><div class="abs" style="left:66px;top:9.8px;width:4.5px;height:3.8px;background:#e8e8e8"></div><div class="abs" style="left:66px;top:17.6px;width:4.5px;height:3.8px;background:#e8e8e8"></div><div class="abs" style="left:66px;top:25.4px;width:4.5px;height:3.8px;background:#e8e8e8"></div><div class="abs" style="left:66px;top:33.2px;width:4.5px;height:3.8px;background:#e8e8e8"></div><div class="abs" style="left:8px;top:0;width:58px;height:40px;background:#141414;padding:2px 1.5px"><div style="width:100%;height:100%;background:radial-gradient(ellipse 40px 26px at 28% 92%,#121416 0%,#1a1e20 60%,rgba(0,0,0,0) 100%),linear-gradient(90deg,rgba(0,0,0,0) 55%,rgba(120,140,155,.75) 90%) 0 0/100% 70% no-repeat,linear-gradient(180deg,#7a8c9c 0%,#68798a 18%,#2e343a 45%,#1c2022 100%)"></div></div></div><div class="t" style="left:519.7px;top:127.5px;width:102px;text-align:center;font-size:9px;color:#262626">HDV_0051</div><div class="abs" style="left:629.8px;top:82px;width:74px;height:40px;background:#767676"><div class="abs" style="left:2px;top:2.0px;width:4.5px;height:3.8px;background:#e8e8e8"></div><div class="abs" style="left:2px;top:9.8px;width:4.5px;height:3.8px;background:#e8e8e8"></div><div class="abs" style="left:2px;top:17.6px;width:4.5px;height:3.8px;background:#e8e8e8"></div><div class="abs" style="left:2px;top:25.4px;width:4.5px;height:3.8px;background:#e8e8e8"></div><div class="abs" style="left:2px;top:33.2px;width:4.5px;height:3.8px;background:#e8e8e8"></div><div class="abs" style="left:66px;top:2.0px;width:4.5px;height:3.8px;background:#e8e8e8"></div><div class="abs" style="left:66px;top:9.8px;width:4.5px;height:3.8px;background:#e8e8e8"></div><div class="abs" style="left:66px;top:17.6px;width:4.5px;height:3.8px;background:#e8e8e8"></div><div class="abs" style="left:66px;top:25.4px;width:4.5px;height:3.8px;background:#e8e8e8"></div><div class="abs" style="left:66px;top:33.2px;width:4.5px;height:3.8px;background:#e8e8e8"></div><div class="abs" style="left:8px;top:0;width:58px;height:40px;background:#141414;padding:2px 1.5px"><div style="width:100%;height:100%;background:linear-gradient(90deg,#e0b870 0%,#c89848 30%,#5a3818 38%,#c08a40 45%,#b8843c 100%) 22% 8%/24px 17px no-repeat,#040303"></div></div></div><div class="t" style="left:616.8px;top:127.5px;width:102px;text-align:center;font-size:9px;color:#262626">HDV_0052</div><div class="abs" style="left:144.3px;top:145px;width:74px;height:40px;background:#767676"><div class="abs" style="left:2px;top:2.0px;width:4.5px;height:3.8px;background:#e8e8e8"></div><div class="abs" style="left:2px;top:9.8px;width:4.5px;height:3.8px;background:#e8e8e8"></div><div class="abs" style="left:2px;top:17.6px;width:4.5px;height:3.8px;background:#e8e8e8"></div><div class="abs" style="left:2px;top:25.4px;width:4.5px;height:3.8px;background:#e8e8e8"></div><div class="abs" style="left:2px;top:33.2px;width:4.5px;height:3.8px;background:#e8e8e8"></div><div class="abs" style="left:66px;top:2.0px;width:4.5px;height:3.8px;background:#e8e8e8"></div><div class="abs" style="left:66px;top:9.8px;width:4.5px;height:3.8px;background:#e8e8e8"></div><div class="abs" style="left:66px;top:17.6px;width:4.5px;height:3.8px;background:#e8e8e8"></div><div class="abs" style="left:66px;top:25.4px;width:4.5px;height:3.8px;background:#e8e8e8"></div><div class="abs" style="left:66px;top:33.2px;width:4.5px;height:3.8px;background:#e8e8e8"></div><div class="abs" style="left:8px;top:0;width:58px;height:40px;background:#141414;padding:2px 1.5px"><div style="width:100%;height:100%;background:radial-gradient(ellipse 7px 7px at 68% 68%,#f4b050 0%,#d87828 50%,rgba(0,0,0,0) 100%),linear-gradient(90deg,rgba(0,0,0,0) 24%,#9c3c16 24%,#b04a1c 50%,rgba(0,0,0,0) 50%) 0 5px/100% 13px no-repeat,linear-gradient(90deg,rgba(0,0,0,0) 54%,#80401a 54%,#8a4820 82%,rgba(0,0,0,0) 82%) 0 3px/100% 27px no-repeat,linear-gradient(90deg,rgba(0,0,0,0) 22%,#2a1408 22%,#2a1408 84%,rgba(0,0,0,0) 84%) 0 2px/100% 30px no-repeat,#060403"></div></div></div><div class="t" style="left:131.3px;top:190.5px;width:102px;text-align:center;font-size:9px;color:#262626">HDV_0053</div><div class="abs" style="left:241.4px;top:145px;width:74px;height:40px;background:#767676"><div class="abs" style="left:2px;top:2.0px;width:4.5px;height:3.8px;background:#e8e8e8"></div><div class="abs" style="left:2px;top:9.8px;width:4.5px;height:3.8px;background:#e8e8e8"></div><div class="abs" style="left:2px;top:17.6px;width:4.5px;height:3.8px;background:#e8e8e8"></div><div class="abs" style="left:2px;top:25.4px;width:4.5px;height:3.8px;background:#e8e8e8"></div><div class="abs" style="left:2px;top:33.2px;width:4.5px;height:3.8px;background:#e8e8e8"></div><div class="abs" style="left:66px;top:2.0px;width:4.5px;height:3.8px;background:#e8e8e8"></div><div class="abs" style="left:66px;top:9.8px;width:4.5px;height:3.8px;background:#e8e8e8"></div><div class="abs" style="left:66px;top:17.6px;width:4.5px;height:3.8px;background:#e8e8e8"></div><div class="abs" style="left:66px;top:25.4px;width:4.5px;height:3.8px;background:#e8e8e8"></div><div class="abs" style="left:66px;top:33.2px;width:4.5px;height:3.8px;background:#e8e8e8"></div><div class="abs" style="left:8px;top:0;width:58px;height:40px;background:#141414;padding:2px 1.5px"><div style="width:100%;height:100%;background:linear-gradient(180deg,rgba(0,0,0,0) 62%,#5a8838 70%,#5a9238 85%,#4e8a30 100%),radial-gradient(ellipse 3px 11px at 48% 52%,#343428 0%,#444438 60%,rgba(0,0,0,0) 100%),radial-gradient(ellipse 14px 9px at 50% 22%,#80806a 0%,#909078 55%,rgba(0,0,0,0) 100%),linear-gradient(90deg,#606a50 0%,#d8dcd8 12%,#d4d8d4 60%,#c4c8c4 88%,#4a5048 100%)"></div></div></div><div class="t" style="left:228.4px;top:190.5px;width:102px;text-align:center;font-size:9px;color:#262626">HDV_0054</div><div class="abs" style="left:338.5px;top:145px;width:74px;height:40px;background:#767676"><div class="abs" style="left:2px;top:2.0px;width:4.5px;height:3.8px;background:#e8e8e8"></div><div class="abs" style="left:2px;top:9.8px;width:4.5px;height:3.8px;background:#e8e8e8"></div><div class="abs" style="left:2px;top:17.6px;width:4.5px;height:3.8px;background:#e8e8e8"></div><div class="abs" style="left:2px;top:25.4px;width:4.5px;height:3.8px;background:#e8e8e8"></div><div class="abs" style="left:2px;top:33.2px;width:4.5px;height:3.8px;background:#e8e8e8"></div><div class="abs" style="left:66px;top:2.0px;width:4.5px;height:3.8px;background:#e8e8e8"></div><div class="abs" style="left:66px;top:9.8px;width:4.5px;height:3.8px;background:#e8e8e8"></div><div class="abs" style="left:66px;top:17.6px;width:4.5px;height:3.8px;background:#e8e8e8"></div><div class="abs" style="left:66px;top:25.4px;width:4.5px;height:3.8px;background:#e8e8e8"></div><div class="abs" style="left:66px;top:33.2px;width:4.5px;height:3.8px;background:#e8e8e8"></div><div class="abs" style="left:8px;top:0;width:58px;height:40px;background:#141414;padding:2px 1.5px"><div style="width:100%;height:100%;background:repeating-linear-gradient(62deg,rgba(40,36,34,.55) 0 1.2px,rgba(0,0,0,0) 1.2px 7px) 0 0/100% 50% no-repeat,radial-gradient(ellipse 12px 6px at 40% 85%,#6a6864 0%,rgba(0,0,0,0) 100%),linear-gradient(180deg,#c8c8d0 0%,#b8b8c4 25%,#8a8890 42%,#3e3834 55%,#38322e 100%),linear-gradient(90deg,rgba(40,40,40,.7) 0%,rgba(0,0,0,0) 25%)"></div></div></div><div class="t" style="left:325.5px;top:190.5px;width:102px;text-align:center;font-size:9px;color:#262626">HDV_0055</div><div class="abs" style="left:435.59999999999997px;top:145px;width:74px;height:40px;background:#767676"><div class="abs" style="left:2px;top:2.0px;width:4.5px;height:3.8px;background:#e8e8e8"></div><div class="abs" style="left:2px;top:9.8px;width:4.5px;height:3.8px;background:#e8e8e8"></div><div class="abs" style="left:2px;top:17.6px;width:4.5px;height:3.8px;background:#e8e8e8"></div><div class="abs" style="left:2px;top:25.4px;width:4.5px;height:3.8px;background:#e8e8e8"></div><div class="abs" style="left:2px;top:33.2px;width:4.5px;height:3.8px;background:#e8e8e8"></div><div class="abs" style="left:66px;top:2.0px;width:4.5px;height:3.8px;background:#e8e8e8"></div><div class="abs" style="left:66px;top:9.8px;width:4.5px;height:3.8px;background:#e8e8e8"></div><div class="abs" style="left:66px;top:17.6px;width:4.5px;height:3.8px;background:#e8e8e8"></div><div class="abs" style="left:66px;top:25.4px;width:4.5px;height:3.8px;background:#e8e8e8"></div><div class="abs" style="left:66px;top:33.2px;width:4.5px;height:3.8px;background:#e8e8e8"></div><div class="abs" style="left:8px;top:0;width:58px;height:40px;background:#141414;padding:2px 1.5px"><div style="width:100%;height:100%;background:linear-gradient(180deg,#b4b4ac 0%,#a4a49c 30%,#4a4034 42%,rgba(0,0,0,0) 50%) 0 0/60% 100% no-repeat,linear-gradient(90deg,#76664c 0%,#7e6e52 40%,#8a8456 70%,#8a8a52 100%)"></div></div></div><div class="t" style="left:422.59999999999997px;top:190.5px;width:102px;text-align:center;font-size:9px;color:#262626">HDV_0056</div><div class="abs" style="left:532.7px;top:145px;width:74px;height:40px;background:#767676"><div class="abs" style="left:2px;top:2.0px;width:4.5px;height:3.8px;background:#e8e8e8"></div><div class="abs" style="left:2px;top:9.8px;width:4.5px;height:3.8px;background:#e8e8e8"></div><div class="abs" style="left:2px;top:17.6px;width:4.5px;height:3.8px;background:#e8e8e8"></div><div class="abs" style="left:2px;top:25.4px;width:4.5px;height:3.8px;background:#e8e8e8"></div><div class="abs" style="left:2px;top:33.2px;width:4.5px;height:3.8px;background:#e8e8e8"></div><div class="abs" style="left:66px;top:2.0px;width:4.5px;height:3.8px;background:#e8e8e8"></div><div class="abs" style="left:66px;top:9.8px;width:4.5px;height:3.8px;background:#e8e8e8"></div><div class="abs" style="left:66px;top:17.6px;width:4.5px;height:3.8px;background:#e8e8e8"></div><div class="abs" style="left:66px;top:25.4px;width:4.5px;height:3.8px;background:#e8e8e8"></div><div class="abs" style="left:66px;top:33.2px;width:4.5px;height:3.8px;background:#e8e8e8"></div><div class="abs" style="left:8px;top:0;width:58px;height:40px;background:#141414;padding:2px 1.5px"><div style="width:100%;height:100%;background:radial-gradient(ellipse 4px 3px at 50% 48%,#e8e0e0 0%,rgba(0,0,0,0) 100%),radial-gradient(ellipse 14px 7px at 52% 62%,#6a6462 0%,#3a3432 60%,rgba(0,0,0,0) 100%),#040404"></div></div></div><div class="t" style="left:519.7px;top:190.5px;width:102px;text-align:center;font-size:9px;color:#262626">HDV_0057</div><div class="abs" style="left:629.8px;top:145px;width:74px;height:40px;background:#767676"><div class="abs" style="left:2px;top:2.0px;width:4.5px;height:3.8px;background:#e8e8e8"></div><div class="abs" style="left:2px;top:9.8px;width:4.5px;height:3.8px;background:#e8e8e8"></div><div class="abs" style="left:2px;top:17.6px;width:4.5px;height:3.8px;background:#e8e8e8"></div><div class="abs" style="left:2px;top:25.4px;width:4.5px;height:3.8px;background:#e8e8e8"></div><div class="abs" style="left:2px;top:33.2px;width:4.5px;height:3.8px;background:#e8e8e8"></div><div class="abs" style="left:66px;top:2.0px;width:4.5px;height:3.8px;background:#e8e8e8"></div><div class="abs" style="left:66px;top:9.8px;width:4.5px;height:3.8px;background:#e8e8e8"></div><div class="abs" style="left:66px;top:17.6px;width:4.5px;height:3.8px;background:#e8e8e8"></div><div class="abs" style="left:66px;top:25.4px;width:4.5px;height:3.8px;background:#e8e8e8"></div><div class="abs" style="left:66px;top:33.2px;width:4.5px;height:3.8px;background:#e8e8e8"></div><div class="abs" style="left:8px;top:0;width:58px;height:40px;background:#141414;padding:2px 1.5px"><div style="width:100%;height:100%;background:radial-gradient(ellipse 5px 3px at 70% 30%,#e8e8e0 0%,rgba(0,0,0,0) 100%),radial-gradient(ellipse 11px 7px at 58% 58%,#7a6a48 0%,#3a3020 60%,rgba(0,0,0,0) 100%),#040404"></div></div></div><div class="t" style="left:616.8px;top:190.5px;width:102px;text-align:center;font-size:9px;color:#262626">HDV_0058</div><div class="abs" style="left:144.3px;top:240px;width:74px;height:40px;background:#767676"><div class="abs" style="left:2px;top:2.0px;width:4.5px;height:3.8px;background:#e8e8e8"></div><div class="abs" style="left:2px;top:9.8px;width:4.5px;height:3.8px;background:#e8e8e8"></div><div class="abs" style="left:2px;top:17.6px;width:4.5px;height:3.8px;background:#e8e8e8"></div><div class="abs" style="left:2px;top:25.4px;width:4.5px;height:3.8px;background:#e8e8e8"></div><div class="abs" style="left:2px;top:33.2px;width:4.5px;height:3.8px;background:#e8e8e8"></div><div class="abs" style="left:66px;top:2.0px;width:4.5px;height:3.8px;background:#e8e8e8"></div><div class="abs" style="left:66px;top:9.8px;width:4.5px;height:3.8px;background:#e8e8e8"></div><div class="abs" style="left:66px;top:17.6px;width:4.5px;height:3.8px;background:#e8e8e8"></div><div class="abs" style="left:66px;top:25.4px;width:4.5px;height:3.8px;background:#e8e8e8"></div><div class="abs" style="left:66px;top:33.2px;width:4.5px;height:3.8px;background:#e8e8e8"></div><div class="abs" style="left:8px;top:0;width:58px;height:40px;background:#141414;padding:2px 1.5px"><div style="width:100%;height:100%;background:radial-gradient(ellipse 6px 5px at 58% 8%,#f0e8c0 0%,rgba(0,0,0,0) 100%),linear-gradient(180deg,rgba(0,0,0,0) 80%,rgba(20,14,8,.8) 100%),linear-gradient(90deg,#8a6010 0%,#8a6412 30%,#5a4418 48%,#2a2214 62%,#060504 66%,#040404 100%)"></div></div></div><div class="t" style="left:131.3px;top:285.5px;width:102px;text-align:center;font-size:9px;color:#262626">HDV_0059</div><div class="abs" style="left:241.4px;top:240px;width:74px;height:40px;background:#767676"><div class="abs" style="left:2px;top:2.0px;width:4.5px;height:3.8px;background:#e8e8e8"></div><div class="abs" style="left:2px;top:9.8px;width:4.5px;height:3.8px;background:#e8e8e8"></div><div class="abs" style="left:2px;top:17.6px;width:4.5px;height:3.8px;background:#e8e8e8"></div><div class="abs" style="left:2px;top:25.4px;width:4.5px;height:3.8px;background:#e8e8e8"></div><div class="abs" style="left:2px;top:33.2px;width:4.5px;height:3.8px;background:#e8e8e8"></div><div class="abs" style="left:66px;top:2.0px;width:4.5px;height:3.8px;background:#e8e8e8"></div><div class="abs" style="left:66px;top:9.8px;width:4.5px;height:3.8px;background:#e8e8e8"></div><div class="abs" style="left:66px;top:17.6px;width:4.5px;height:3.8px;background:#e8e8e8"></div><div class="abs" style="left:66px;top:25.4px;width:4.5px;height:3.8px;background:#e8e8e8"></div><div class="abs" style="left:66px;top:33.2px;width:4.5px;height:3.8px;background:#e8e8e8"></div><div class="abs" style="left:8px;top:0;width:58px;height:40px;background:#141414;padding:2px 1.5px"><div style="width:100%;height:100%;background:radial-gradient(ellipse 3px 3px at 25% 88%,#e0e0e0 0%,rgba(0,0,0,0) 100%),radial-gradient(ellipse 18px 10px at 30% 90%,#101010 0%,#1a1a1a 50%,rgba(0,0,0,0) 100%),linear-gradient(90deg,#5a6a50 0%,#6a8060 20%,#6a7060 38%,#8a8890 55%,#7a7880 72%,#3a3c3c 85%,#6a6c6c 100%)"></div></div></div><div class="t" style="left:228.4px;top:285.5px;width:102px;text-align:center;font-size:9px;color:#262626">HDV_0060</div><div class="abs" style="left:338.5px;top:240px;width:74px;height:40px;background:#767676"><div class="abs" style="left:2px;top:2.0px;width:4.5px;height:3.8px;background:#e8e8e8"></div><div class="abs" style="left:2px;top:9.8px;width:4.5px;height:3.8px;background:#e8e8e8"></div><div class="abs" style="left:2px;top:17.6px;width:4.5px;height:3.8px;background:#e8e8e8"></div><div class="abs" style="left:2px;top:25.4px;width:4.5px;height:3.8px;background:#e8e8e8"></div><div class="abs" style="left:2px;top:33.2px;width:4.5px;height:3.8px;background:#e8e8e8"></div><div class="abs" style="left:66px;top:2.0px;width:4.5px;height:3.8px;background:#e8e8e8"></div><div class="abs" style="left:66px;top:9.8px;width:4.5px;height:3.8px;background:#e8e8e8"></div><div class="abs" style="left:66px;top:17.6px;width:4.5px;height:3.8px;background:#e8e8e8"></div><div class="abs" style="left:66px;top:25.4px;width:4.5px;height:3.8px;background:#e8e8e8"></div><div class="abs" style="left:66px;top:33.2px;width:4.5px;height:3.8px;background:#e8e8e8"></div><div class="abs" style="left:8px;top:0;width:58px;height:40px;background:#141414;padding:2px 1.5px"><div style="width:100%;height:100%;background:linear-gradient(180deg,#f4c070 0%,#e89848 60%,#c86828 100%) 54% 32%/6px 16px no-repeat,radial-gradient(ellipse 10px 6px at 25% 70%,#1c1208 0%,rgba(0,0,0,0) 100%),#050403"></div></div></div><div class="t" style="left:325.5px;top:285.5px;width:102px;text-align:center;font-size:9px;color:#262626">HDV_0061</div><svg class="abs" style="left:448px;top:211px" width="51" height="68"><defs><linearGradient id="ring" x1="0" y1="0" x2="1" y2="1"><stop offset="0" stop-color="#f0a060"/><stop offset="0.5" stop-color="#c07898"/><stop offset="1" stop-color="#8a50c8"/></linearGradient></defs><path d="M0.5 0.5 H35 L49.5 15 V67 H0.5Z" fill="#f6f6f6" stroke="#dcdcdc"/><path d="M35 0.5 V15 H49.5Z" fill="#e4e4e4" stroke="#dcdcdc"/><circle cx="25" cy="34" r="17.5" fill="url(#ring)"/><circle cx="25" cy="34" r="13.8" fill="#2e2e30"/><path d="M21 25.5 L33 34 L21 42.5Z" fill="#f0f0f0"/></svg><div class="t" style="left:422.5px;top:285.5px;width:100px;text-align:center;font-size:9px;color:#262626">HDV_0062</div><div class="abs" style="left:625px;top:12px;width:10px;height:1px;background:#a8a8a8"></div><div class="abs" style="left:662px;top:8px;width:9px;height:9px;border:1px solid #b0b0b0"></div><svg class="abs" style="left:700px;top:8px" width="9" height="9"><path d="M0.5 0.5 L8.5 8.5 M8.5 0.5 L0.5 8.5" stroke="#aaa" stroke-width="1"/></svg><svg class="abs" style="left:693px;top:31px" width="9" height="6"><path d="M1 1 L4.5 4.5 L8 1" stroke="#9a9a9a" stroke-width="1.1" fill="none"/></svg><div class="abs" style="left:708px;top:27px;width:12px;height:12px;border-radius:50%;background:#1c62ac"></div><div class="t" style="left:708px;top:29px;width:12px;text-align:center;font-size:9px;font-weight:bold;color:#fff">?</div><div class="abs" style="left:410px;top:45px;width:26px;height:25px;border:1px solid #e6e6e6;border-left:none"></div><svg class="abs" style="left:418px;top:53px" width="11" height="11"><path d="M3.3 2.6 A3.9 3.9 0 1 0 7.2 2.6" stroke="#555" stroke-width="1.4" fill="none"/><path d="M1.2 0.8 L5.2 2.2 L2.2 5Z" fill="#555"/></svg><div class="abs" style="left:443px;top:45px;width:273px;height:25px;border:1px solid #e3e3e3"></div><svg class="abs" style="left:453px;top:53px" width="10" height="10"><circle cx="6" cy="4" r="3.2" stroke="#888" stroke-width="1" fill="none"/><path d="M3.7 6.3 L0.8 9.2" stroke="#888" stroke-width="1.1"/></svg><div class="t" style="left:475px;top:54.5px;font-size:9.3px;color:#777">Search New folder</div><svg class="abs" style="left:394px;top:56px" width="8" height="6"><path d="M1 1 L4 4 L7 1" stroke="#555" stroke-width="1.2" fill="none"/></svg>
<div class="t" style="left:13px;top:462px;font-size:9px;color:#666">16 items</div><div class="abs" style="left:710.5px;top:455px;width:9px;height:19px;background:#cfe3f5;border:1px solid #9cc8ec"></div>
<div class="abs" style="left:0;top:0;width:1px;height:474.5px;background:#b4b4b4"></div><div class="abs" style="left:0;top:473.0px;width:723px;height:1.5px;background:#b8b8b8"></div>
</div>
<div class="abs" style="left:640px;top:369px;width:360px;height:134.5px;background:#fff;border:1px solid #9a9a9a;box-shadow:0 2px 10px 2px rgba(0,0,0,0.25)">
<div class="abs" style="left:7px;top:9px;width:4px;height:4px;background:#3c9a3c"></div>
<svg class="abs" style="left:11px;top:9px" width="8" height="7"><path d="M0 3.5 H5 M3 1 L6 3.5 L3 6" stroke="#3a78c8" stroke-width="1.6" fill="none"/></svg>
<div class="t" style="left:21.6px;top:8px;font-size:9.5px;color:#333">59% complete</div>
<div class="abs" style="left:262px;top:12px;width:7px;height:1px;background:#555"></div>
<div class="abs" style="left:297px;top:8px;width:9px;height:9px;border:1px solid #e0e0e0"></div>
<svg class="abs" style="left:336px;top:8px" width="9" height="9"><path d="M0.5 0.5 L8.5 8.5 M8.5 0.5 L0.5 8.5" stroke="#555" stroke-width="1.1"/></svg>
<div class="t" style="left:21px;top:36px;font-size:9.7px;color:#333">Copying 23 items from <span style="color:#2f73c2">100VIDEO</span> to <span style="color:#2f73c2">New folder</span></div>
<div class="t" style="left:21px;top:51.5px;font-size:12.7px;color:#222">59% complete</div>
<div class="abs" style="left:289.5px;top:56px;width:1.5px;height:6px;background:#333"></div>
<div class="abs" style="left:292.5px;top:56px;width:1.5px;height:6px;background:#333"></div>
<svg class="abs" style="left:326px;top:55px" width="8" height="8"><path d="M1 1 L7 7 M7 1 L1 7" stroke="#222" stroke-width="1.6"/></svg>
<div class="abs" style="left:20.5px;top:73px;width:316px;height:12px;background:#e6e6e6;border:1px solid #d6d6d6"></div>
<div class="abs" style="left:20.5px;top:73px;width:186px;height:12px;background:linear-gradient(90deg,#06b025 0%,#06b025 78%,#3cc050 86%,#7ddc86 94%,#3cc050 100%)"></div>
<div class="abs" style="left:0;top:98px;width:358px;height:1px;background:#e8e8e8"></div>
<svg class="abs" style="left:20px;top:108px" width="17" height="17"><circle cx="8.5" cy="8.5" r="7.5" fill="none" stroke="#9a9a9a" stroke-width="1"/><path d="M5.5 7.5 L8.5 10.5 L11.5 7.5" stroke="#777" stroke-width="1" fill="none"/></svg>
<div class="t" style="left:41.5px;top:112px;font-size:9.5px;color:#444">More details</div>
</div>
<div class="t" style="left:7px;top:43px;font-size:9px;color:#fff">R</div>
<svg class="abs" style="left:922px;top:9px" width="12" height="16"><path d="M1.5 1.5 V13 L4.2 10.4 L6.3 14.8 L8 14 L6 9.8 H9.8Z" fill="#fff" stroke="#10204a" stroke-width="0.9"/></svg>
<div class="abs" style="left:0;top:544px;width:1024px;height:32px;background:linear-gradient(90deg,#233842 0%,#22393e 30%,#1f3040 60%,#1c2b40 85%,#1b2a40 100%)"></div>
<svg class="abs" style="left:12px;top:552px" width="15" height="15"><path d="M0.5 2.2 L6.3 1.4 V7 H0.5Z M7.3 1.2 L14.5 0.2 V7 H7.3Z M0.5 8 H6.3 V13.6 L0.5 12.8Z M7.3 8 H14.5 V14.8 L7.3 13.8Z" fill="#fff"/></svg>
<div class="abs" style="left:39px;top:545px;width:230px;height:31px;background:#f2f2f2;border-top:1px solid #dcdcdc"></div>
<svg class="abs" style="left:47px;top:552px" width="15" height="15"><circle cx="9" cy="6" r="4.6" stroke="#333" stroke-width="1.3" fill="none"/><path d="M5.7 9.3 L1 14" stroke="#333" stroke-width="1.5"/></svg>
<div class="t" style="left:71px;top:554.5px;font-size:12.4px;transform:scaleX(.95);transform-origin:0 0;color:#333">Type here to search</div>
<svg class="abs" style="left:280px;top:553px" width="15" height="14"><rect x="3" y="3" width="7.5" height="8" fill="none" stroke="#b4bac0" stroke-width="1.3"/><path d="M0.8 0.8 H12 M0.8 13.2 H12 M13.6 0 V5 M13.6 7 V14 M0.6 3 V11" stroke="#b4bac0" stroke-width="1.2"/></svg>
<svg class="abs" style="left:319px;top:549.5px" width="21" height="20"><defs><linearGradient id="eg" x1="0" y1="0" x2="0.3" y2="1"><stop offset="0" stop-color="#3cc8f2"/><stop offset="0.45" stop-color="#1c86dc"/><stop offset="1" stop-color="#0e4fae"/></linearGradient><linearGradient id="eg2" x1="0" y1="0" x2="1" y2="1"><stop offset="0" stop-color="#34c6e8"/><stop offset="1" stop-color="#6ee06a"/></linearGradient></defs><circle cx="10.4" cy="10" r="9.6" fill="url(#eg)"/><path d="M4 5 A9.6 9.6 0 0 1 20 10 Q20 13.5 17 14 Q14 14.5 12.5 12.5 Q15 11.5 14.5 9 Q13.5 6 9.5 6.5 Q6 7 4 5Z" fill="url(#eg2)"/><path d="M9.8 8.5 Q13 8.3 13.2 11 Q13 13.5 10.5 13.5 Q8.8 12.5 8.8 10.5Z" fill="#0e3a66"/></svg>
<div class="abs" style="left:349.5px;top:544px;width:24px;height:32px;background:#5e8a5e"></div>
<div class="abs" style="left:373.5px;top:544px;width:13px;height:32px;background:#6a747e"></div>
<div class="abs" style="left:386.5px;top:544px;width:2px;height:32px;background:#3e4a56"></div>
<div class="abs" style="left:349.5px;top:574px;width:36px;height:2px;background:#5ee07a"></div>
<svg class="abs" style="left:360px;top:553px" width="18" height="15"><path d="M0.5 1.5 H6 L7.5 3 H17.5 V14 H0.5Z" fill="#f5c842"/><rect x="0.5" y="5" width="17" height="9" fill="#ffd95a"/><rect x="6" y="9" width="6" height="5" fill="#4a82c8"/><rect x="7" y="10" width="4" height="2" fill="#dfe8f0"/></svg>
<svg class="abs" style="left:400px;top:551px" width="19" height="19"><rect x="0.5" y="3" width="18" height="15.5" rx="2" fill="#f4f4f4"/><path d="M6 3 Q6 0.5 9.5 0.5 Q13 0.5 13 3" stroke="#2f9ae8" stroke-width="1" fill="none"/><rect x="5.5" y="7" width="3.5" height="3.5" fill="#f25022"/><rect x="10" y="7" width="3.5" height="3.5" fill="#7fba00"/><rect x="5.5" y="11.5" width="3.5" height="3.5" fill="#00a4ef"/><rect x="10" y="11.5" width="3.5" height="3.5" fill="#ffb900"/></svg>
<svg class="abs" style="left:439px;top:549.5px" width="20" height="20"><defs><linearGradient id="ff" x1="1" y1="0" x2="0" y2="1"><stop offset="0" stop-color="#ffe04a"/><stop offset="0.4" stop-color="#ff8a2a"/><stop offset="1" stop-color="#e82c6a"/></linearGradient></defs><circle cx="10" cy="10" r="9.3" fill="url(#ff)"/><path d="M2 2.5 Q5 0.5 8 2.5 Q6.5 4 5.5 5Z" fill="#21353f"/><circle cx="10" cy="10.5" r="3.8" fill="#8a3ed6"/><path d="M6.5 8 Q9 5.5 12 7" stroke="#ffb080" stroke-width="1.2" fill="none"/></svg>
<svg class="abs" style="left:479.5px;top:550px" width="22" height="22"><circle cx="9.5" cy="9.7" r="8.6" fill="#161616" stroke="#c4c4c4" stroke-width="1.3"/><path d="M6 4 Q9 2.8 10.5 5.5 Q8 6.5 6 4Z M4 11 Q3 7.5 5.5 6.5 Q6.5 9 4 11Z" fill="#cfcfcf"/><circle cx="15" cy="14.3" r="5.6" fill="#ee1212"/></svg>
<div class="abs" style="left:473px;top:574px;width:32px;height:2px;background:#9cc4e8"></div>
<svg class="abs" style="left:725px;top:552px" width="21" height="14"><path d="M3.5 13.5 H17 A3.5 3.5 0 0 0 17.5 6.5 A6 6 0 0 0 6.5 5 A4.2 4.2 0 0 0 3.5 13.5Z" fill="#d6e2f4"/></svg>
<div class="t" style="left:751px;top:555px;font-size:11.4px;color:#e8ecf0">32°F&nbsp; Cloudy</div>
<svg class="abs" style="left:833px;top:556px" width="10" height="7"><path d="M1 6 L5 1.5 L9 6" stroke="#dde" stroke-width="1.2" fill="none"/></svg>
<svg class="abs" style="left:852px;top:554px" width="14" height="11"><rect x="0.5" y="1" width="3" height="4" fill="#ddd"/><rect x="2" y="3" width="10" height="6" fill="#e8e8e8"/><rect x="0.5" y="9" width="13" height="1.5" fill="#bbb"/></svg>
<svg class="abs" style="left:872px;top:554px" width="13" height="12"><path d="M0.5 4 H3 L6.5 1 V11 L3 8 H0.5Z" fill="none" stroke="#e0e0e0" stroke-width="1"/><path d="M8.5 4 Q10 6 8.5 8 M10.5 2.5 Q13 6 10.5 9.5" stroke="#e0e0e0" stroke-width="1" fill="none"/></svg>
<svg class="abs" style="left:893px;top:554px" width="12" height="12"><path d="M1 11 A10 10 0 0 1 11 1 M3.5 11 A7.5 7.5 0 0 1 11 3.5 M6 11 A5 5 0 0 1 11 6" stroke="#b8bcc4" stroke-width="1" fill="none"/><circle cx="10" cy="10" r="1.2" fill="#eee"/></svg>
<svg class="abs" style="left:912px;top:553px" width="9" height="15"><rect x="1" y="0.5" width="7" height="9" rx="1" fill="#e8e8e8"/><rect x="2" y="9" width="5" height="5" fill="#cfcfcf"/></svg>
<div class="t" style="left:934px;top:547.5px;font-size:10.3px;color:#e8ecf0">7:35 AM</div>
<div class="t" style="left:930.5px;top:564px;font-size:10.3px;color:#e8ecf0">2/12/2024</div>
<svg class="abs" style="left:988px;top:551px" width="20" height="22"><path d="M1 1 H15 V12 H6 L3 15 V12 H1Z" fill="#f0f0f0"/><path d="M3.5 4 H12.5 M3.5 6.5 H12.5 M3.5 9 H10" stroke="#1f2a3a" stroke-width="0.9"/><circle cx="15" cy="15.5" r="5.5" fill="#1b2a40" stroke="#777" stroke-width="0.8"/><text x="15" y="19" font-size="9" font-family="Liberation Sans" font-weight="bold" fill="#fff" text-anchor="middle">2</text></svg>
<div class="abs" style="left:1019px;top:544px;width:1px;height:32px;background:#6a7280"></div></body></html>
